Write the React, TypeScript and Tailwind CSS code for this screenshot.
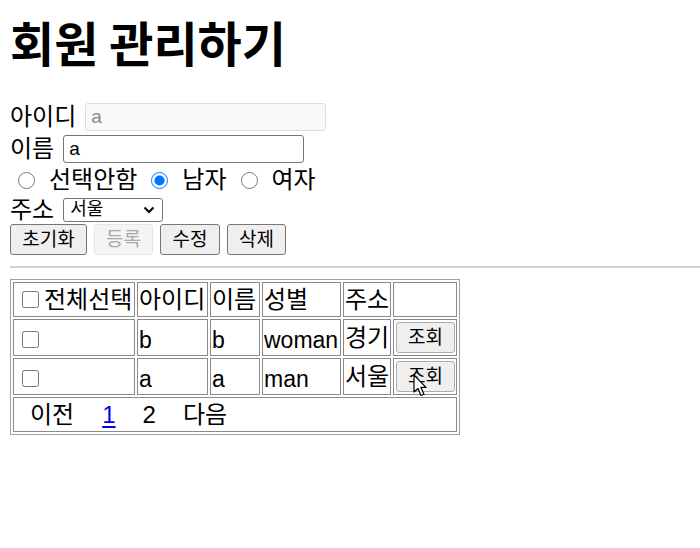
import React, { useState } from 'react';

interface Member {
  id: string;
  name: string;
  gender: string;
  addr: string;
}

const members: Member[] = [
  { id: 'b', name: 'b', gender: 'woman', addr: '경기' },
  { id: 'a', name: 'a', gender: 'man', addr: '서울' },
];

// 기본 브라우저 버튼 모양
const btn =
  'h-[31px] px-[10px] text-[19px] leading-none border border-[#767676] rounded-[3px] bg-[#efefef] text-black';

const cell = 'border border-[#8a8a8a] p-[1px] whitespace-nowrap overflow-hidden';

function Pointer() {
  return (
    <svg className="absolute left-[17px] top-[13px] pointer-events-none" width="16" height="24" viewBox="0 0 16 24">
      <path
        d="M1 1 L1 18 L5 14.5 L8 21.5 L11 20.2 L8 13.4 L13 13.4 Z"
        fill="#fff"
        stroke="#000"
        strokeWidth="1.2"
        strokeLinejoin="round"
      />
    </svg>
  );
}

export default function App() {
  const [gender, setGender] = useState('man');

  return (
    <div className="min-h-[548px] bg-white text-black font-['Liberation_Sans','Noto_Sans_CJK_KR',sans-serif] text-[24px]">
      <div className="px-[10px]">
        <h1 className="mt-[17px] text-[48px] leading-[48px] font-bold font-['Noto_Sans_CJK_KR',sans-serif]">회원 관리하기</h1>

        {/* 입력 폼 */}
        <div className="mt-[36px]">
          <div className="h-[32px] flex items-center">
            <span>아이디</span>
            <input
              disabled
              value="a"
              readOnly
              className="ml-[9px] w-[241px] h-[28px] px-[5px] text-[19px] border border-[#dcdcdc] rounded-[3px] bg-[#f9f9f9] text-[#8a8a8a]"
            />
          </div>
          <div className="h-[32px] flex items-center">
            <span>이름</span>
            <input
              value="a"
              readOnly
              className="ml-[9px] w-[241px] h-[28px] px-[5px] text-[19px] border border-[#767676] rounded-[3px] bg-white"
            />
          </div>
          <div className="h-[30px] flex items-center pl-[8px]">
            {[
              ['none', '선택안함'],
              ['man', '남자'],
              ['woman', '여자'],
            ].map(([v, label]) => (
              <label key={v} className="flex items-center mr-[14px]">
                <input
                  type="radio"
                  name="gender"
                  checked={gender === v}
                  onChange={() => setGender(v)}
                  className="w-[17px] h-[17px] m-0"
                />
                <span className="ml-[14px]">{label}</span>
              </label>
            ))}
          </div>
          <div className="h-[29px] flex items-center">
            <span>주소</span>
            <div className="ml-[9px] w-[100px] h-[24px] flex items-center justify-between pl-[6px] pr-[7px] text-[18px] border border-[#767676] rounded-[3px] bg-white">
              <span>서울</span>
              <svg width="12" height="8" viewBox="0 0 12 8">
                <path d="M1.5 1.5 L6 6 L10.5 1.5" fill="none" stroke="#000" strokeWidth="2" />
              </svg>
            </div>
          </div>
          <div className="h-[32px] flex items-start gap-[7px]">
            <button className={`${btn} w-[77px]`}>초기화</button>
            <button disabled className="h-[31px] w-[59px] text-[19px] leading-none border border-[#e4e4e4] rounded-[3px] bg-[#f4f4f4] text-[#a8a8a8]">
              등록
            </button>
            <button className={`${btn} w-[60px]`}>수정</button>
            <button className={`${btn} w-[59px]`}>삭제</button>
          </div>
        </div>
      </div>

      <hr className="ml-[10px] mt-[10px] border-0 h-[2px] bg-[#d2d2d2]" />

      {/* 회원 목록 */}
      <div className="px-[10px] mt-[11px]">
        <table className="table-fixed w-[450px] leading-[28px] border-separate border-spacing-[2px] border border-[#a0a0a0]">
          <colgroup>
            <col className="w-[122px]" />
            <col className="w-[71px]" />
            <col className="w-[50px]" />
            <col className="w-[79px]" />
            <col className="w-[48px]" />
            <col className="w-[64px]" />
          </colgroup>
          <tbody>
            <tr className="h-[35px]">
              <td className={cell}>
                <label className="flex items-center">
                  <input type="checkbox" className="w-[17px] h-[17px] m-0 ml-[7px] mr-[5px]" />
                  <span>전체선택</span>
                </label>
              </td>
              <td className={cell}>아이디</td>
              <td className={cell}>이름</td>
              <td className={cell}>성별</td>
              <td className={cell}>주소</td>
              <td className={cell}></td>
            </tr>
            {members.map((m, i) => (
              <tr key={m.id} className="h-[37px]">
                <td className={cell}>
                  <input type="checkbox" className="w-[17px] h-[17px] m-0 ml-[7px] align-middle" />
                </td>
                <td className={`${cell} align-bottom text-[23px]`}>{m.id}</td>
                <td className={`${cell} align-bottom text-[23px]`}>{m.name}</td>
                <td className={`${cell} align-bottom text-[23px]`}>{m.gender}</td>
                <td className={cell}>{m.addr}</td>
                <td className="border border-[#8a8a8a] px-[2px]">
                  <div className="relative">
                    <button className={`${btn} w-[59px] border-[#adadad] ${i === 1 ? 'bg-[#e5e5e5]' : ''}`}>조회</button>
                    {i === 1 && <Pointer />}
                  </div>
                </td>
              </tr>
            ))}
            <tr className="h-[35px]">
              <td colSpan={6} className={cell}>
                <div className="flex items-center">
                  <span className="pl-[15px] pr-[15px]">이전</span>
                  <a href="#" className="px-[13px] text-[#0000ee] underline underline-offset-[3px]">1</a>
                  <span className="px-[14px]">2</span>
                  <span className="px-[13px]">다음</span>
                </div>
              </td>
            </tr>
          </tbody>
        </table>
      </div>
    </div>
  );
}
